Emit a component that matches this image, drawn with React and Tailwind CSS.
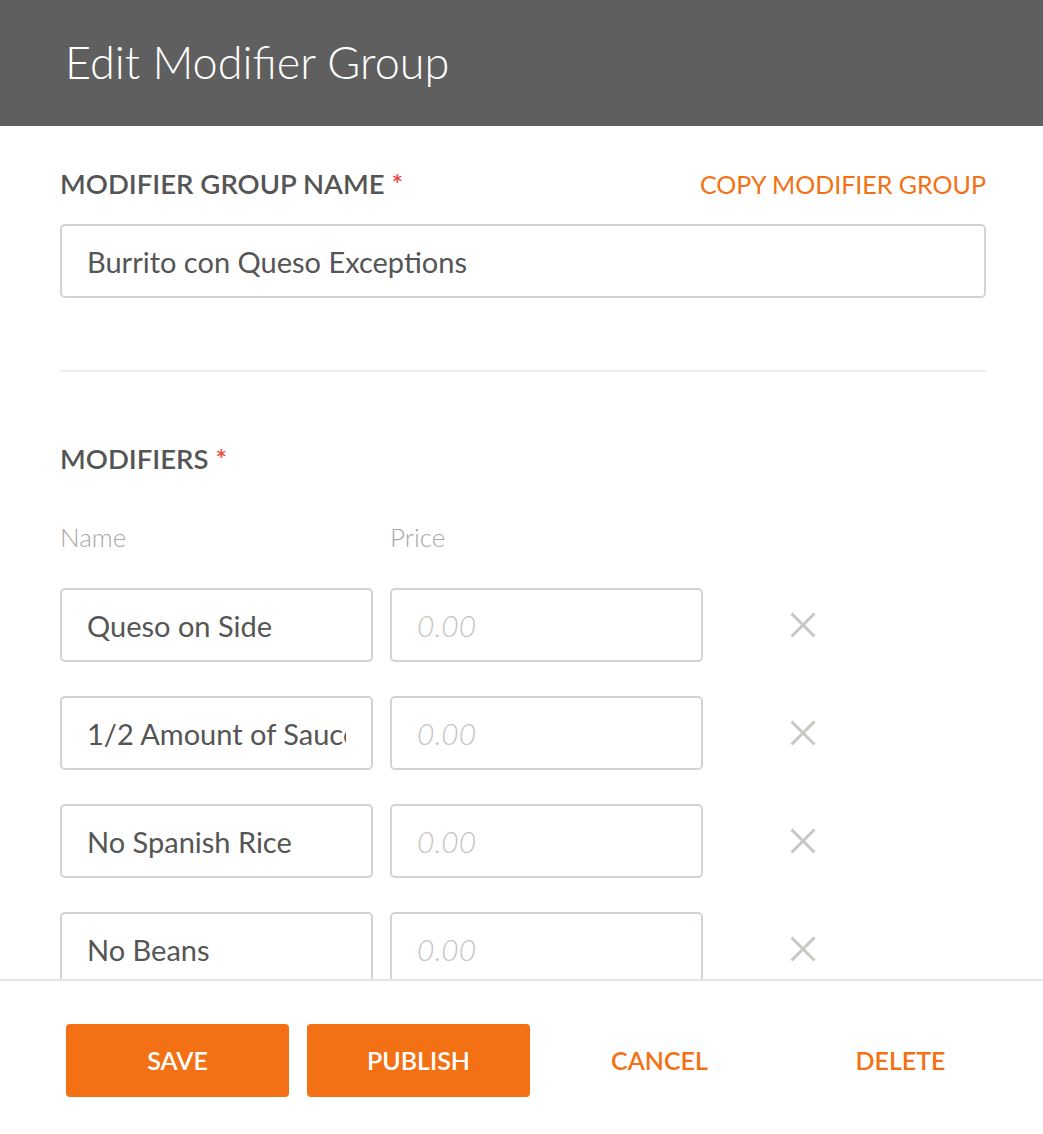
import React from "react";

const rows = ["Queso on Side", "1/2 Amount of Sauce", "No Spanish Rice", "No Beans"];

const CloseIcon = () => (
  <svg width="26" height="26" viewBox="0 0 26 26" fill="none">
    <path d="M1.5 1.5L24.5 24.5M24.5 1.5L1.5 24.5" stroke="#cac6c2" strokeWidth="3" />
  </svg>
);

const App = () => {
  return (
    <div className="h-[1134px] flex flex-col bg-white font-['Lato',sans-serif] text-[#555555]">
      <header className="h-[126px] shrink-0 bg-[#5f5f5f] px-[65px] flex items-center">
        <h1 className="text-[45px] font-light text-white leading-none pb-[2px]">Edit Modifier Group</h1>
      </header>

      <main className="flex-1 min-h-0 overflow-hidden pl-[60px] pr-[57px]">
        <div className="flex items-center justify-between pt-[42px] h-[74px]">
          <label className="text-[27.5px] font-semibold leading-[32px]">
            MODIFIER GROUP NAME <span className="text-[#f2453d]">*</span>
          </label>
          <a className="text-[25px] leading-[32px] text-[#f37114]">COPY MODIFIER GROUP</a>
        </div>
        <input
          type="text"
          defaultValue="Burrito con Queso Exceptions"
          className="mt-[24px] w-full h-[74px] rounded-[5px] border-2 border-[#d6d2ce] px-[25px] text-[29px] text-[#555555] outline-none"
        />

        <div className="mt-[72px] border-t-2 border-[#ececec]" />

        <h2 className="mt-[71px] text-[27.5px] font-semibold leading-[32px]">
          MODIFIERS <span className="text-[#f2453d]">*</span>
        </h2>

        <div className="mt-[48px] flex gap-[17px] text-[26px] font-light text-[#a8a8a8] leading-[28px]">
          <span className="w-[313px]">Name</span>
          <span className="w-[313px]">Price</span>
        </div>

        <div className="mt-[37px] flex flex-col gap-[34px]">
          {rows.map((name) => (
            <div key={name} className="flex items-center gap-[17px]">
              <input
                type="text"
                defaultValue={name}
                className="w-[313px] h-[74px] rounded-[5px] border-2 border-[#d6d2ce] px-[25px] text-[29px] text-[#555555] outline-none"
              />
              <input
                type="text"
                placeholder="0.00"
                className="w-[313px] h-[74px] rounded-[5px] border-2 border-[#d6d2ce] px-[25px] text-[30px] italic font-light outline-none placeholder:text-[#c8c4c0]"
              />
              <button className="ml-[70px] w-[26px] h-[26px] flex items-center justify-center">
                <CloseIcon />
              </button>
            </div>
          ))}
        </div>
      </main>

      <footer className="h-[155px] shrink-0 border-t-2 border-[#e6e6e6] pl-[66px] pr-[31px] pt-[43px]">
        <div className="grid grid-cols-4 gap-[18px]">
          <button className="h-[73px] rounded-[4px] bg-[#f37114] text-white text-[25px] font-semibold">SAVE</button>
          <button className="h-[73px] rounded-[4px] bg-[#f37114] text-white text-[25px] font-semibold">PUBLISH</button>
          <button className="h-[73px] text-[#f37114] text-[25px] font-semibold">CANCEL</button>
          <button className="h-[73px] text-[#f37114] text-[25px] font-semibold">DELETE</button>
        </div>
      </footer>
    </div>
  );
};

export default App;
